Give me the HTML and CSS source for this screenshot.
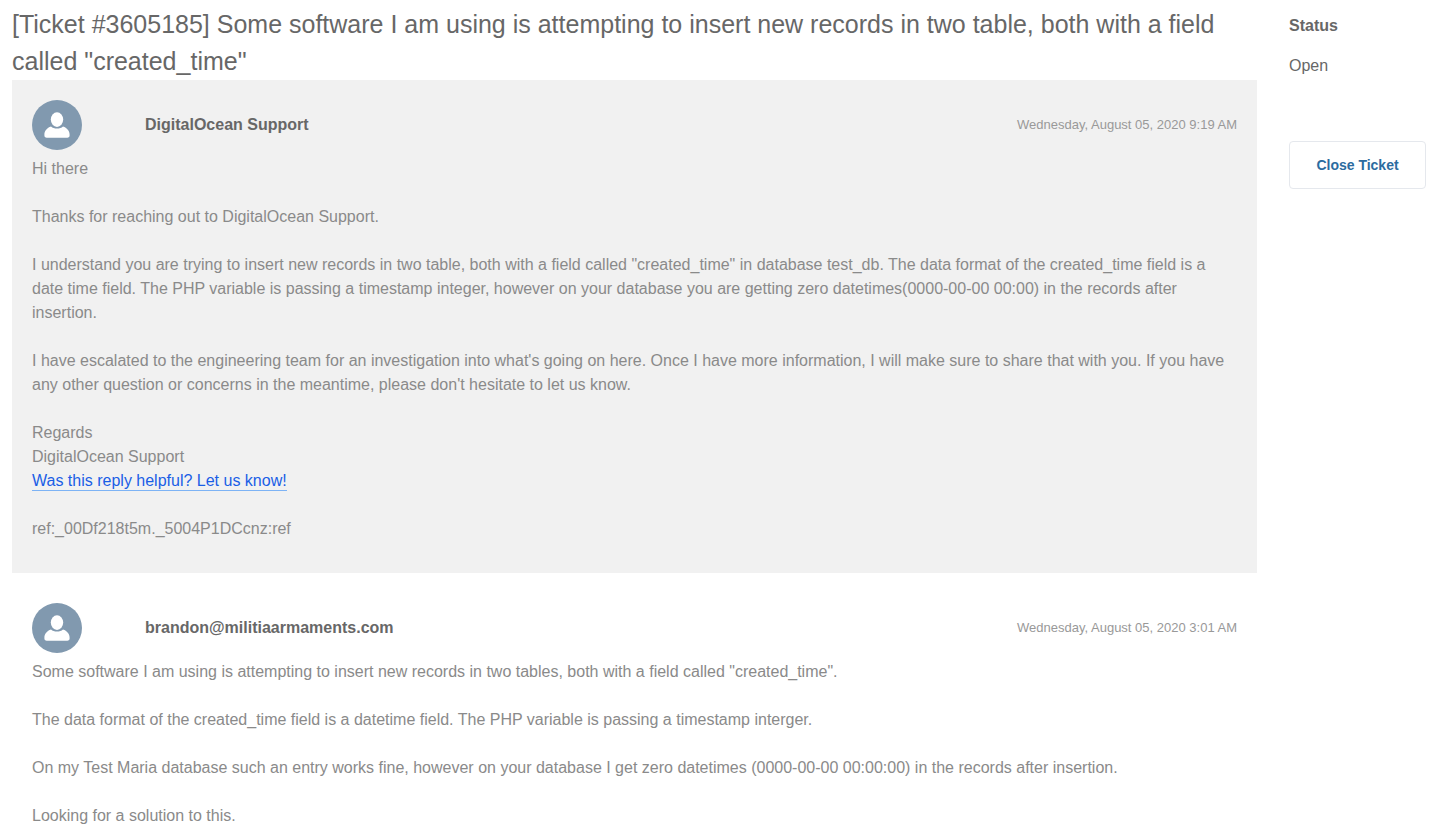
FILE: index.html
```
<!DOCTYPE html>
<html lang="en">
    <head>
        <meta charset="utf-8">
        <title>Ticket #3605185</title>
        <link rel="stylesheet" href="styles.css">
    </head>
    <body>
        <div class="ticket">
            <main class="thread">
                <h1>[Ticket #3605185] Some software I am using is attempting to insert new records in two table, both with a field called "created_time"</h1>

                <article class="message staff">
                    <header class="message-header">
                        <svg class="avatar" viewBox="0 0 50 50" aria-hidden="true">
                            <circle cx="25" cy="25" r="25" fill="#8199af"/>
                            <ellipse cx="25" cy="19.600" rx="6.200" ry="7.300" fill="#fff"/>
                            <path fill="#fff" d="M19 26.500C20.500 27.900 22.600 28.600 25 28.600S29.500 27.900 31 26.500C35 27.800 37.600 30.800 37.600 34.800V35.600C37.600 37 36.800 37.700 35.300 37.700H14.700C13.200 37.700 12.400 37 12.400 35.600V34.800C12.400 30.800 15 27.800 19 26.500Z"/>
                        </svg>
                        <span class="author">DigitalOcean Support</span>
                        <time class="date" datetime="2020-08-05T09:19">Wednesday, August 05, 2020 9:19 AM</time>
                    </header>
                    <div class="message-body">
                        <p>Hi there</p>
                        <p>Thanks for reaching out to DigitalOcean Support.</p>
                        <p>I understand you are trying to insert new records in two table, both with a field called "created_time" in database test_db. The data format of the created_time field is a date time field. The PHP variable is passing a timestamp integer, however on your database you are getting zero datetimes(0000-00-00 00:00) in the records after insertion.</p>
                        <p>I have escalated to the engineering team for an investigation into what's going on here. Once I have more information, I will make sure to share that with you. If you have any other question or concerns in the meantime, please don't hesitate to let us know.</p>
                        <p>Regards<br>
                        DigitalOcean Support<br>
                        <a href="#">Was this reply helpful? Let us know!</a></p>
                        <p>ref:_00Df218t5m._5004P1DCcnz:ref</p>
                    </div>
                </article>

                <article class="message">
                    <header class="message-header">
                        <svg class="avatar" viewBox="0 0 50 50" aria-hidden="true">
                            <circle cx="25" cy="25" r="25" fill="#8199af"/>
                            <ellipse cx="25" cy="19.600" rx="6.200" ry="7.300" fill="#fff"/>
                            <path fill="#fff" d="M19 26.500C20.500 27.900 22.600 28.600 25 28.600S29.500 27.900 31 26.500C35 27.800 37.600 30.800 37.600 34.800V35.600C37.600 37 36.800 37.700 35.300 37.700H14.700C13.200 37.700 12.400 37 12.400 35.600V34.800C12.400 30.800 15 27.800 19 26.500Z"/>
                        </svg>
                        <span class="author">brandon@militiaarmaments.com</span>
                        <time class="date" datetime="2020-08-05T03:01">Wednesday, August 05, 2020 3:01 AM</time>
                    </header>
                    <div class="message-body">
                        <p>Some software I am using is attempting to insert new records in two tables, both with a field called "created_time".</p>
                        <p>The data format of the created_time field is a datetime field. The PHP variable is passing a timestamp interger.</p>
                        <p>On my Test Maria database such an entry works fine, however on your database I get zero datetimes (0000-00-00 00:00:00) in the records after insertion.</p>
                        <p>Looking for a solution to this.</p>
                    </div>
                </article>
            </main>

            <aside class="sidebar">
                <h2>Status</h2>
                <p class="status">Open</p>
                <button type="button" class="close-ticket">Close Ticket</button>
            </aside>
        </div>
    </body>
</html>
```

FILE: styles.css
```
* {
    box-sizing: border-box;
}
body {
    margin: 0;
    font-family: "Liberation Sans", Arial, Helvetica, sans-serif;
    font-size: 16px;
    line-height: 24px;
    color: #676767;
    background: #fff;
}
h1, h2, p {
    margin: 0;
}
.ticket {
    display: flex;
    align-items: flex-start;
    gap: 32px;
    padding: 6px 27px 0 12px;
}
.thread {
    flex: 1;
}
h1 {
    font-size: 25px;
    font-weight: normal;
    line-height: 37px;
}
.message {
    padding: 20px 20px 32px;
    margin-bottom: 10px;
}
.message:last-child {
    padding-bottom: 0;
    margin-bottom: 0;
}
.staff {
    background: #f1f1f1;
}
.message-header {
    display: flex;
    align-items: center;
    margin-bottom: 7px;
}
.avatar {
    width: 50px;
    height: 50px;
    margin-right: 63px;
}
.author {
    font-weight: bold;
}
.date {
    margin-left: auto;
    font-size: 13px;
    color: #999;
}
.message-body {
    color: #8a8a8a;
}
.message-body p + p {
    margin-top: 24px;
}
.message-body a {
    color: #1a5ee6;
    text-decoration: none;
    border-bottom: 1px solid #7db3f5;
    padding-bottom: 1px;
}
.sidebar {
    width: 137px;
    padding-top: 8px;
}
.sidebar h2 {
    font-size: 16px;
    line-height: 24px;
}
.status {
    margin: 16px 0 63px;
}
.close-ticket {
    width: 100%;
    height: 48px;
    border: 1px solid #e5e8ed;
    border-radius: 4px;
    background: #fff;
    color: #2c6c9f;
    font: bold 14px "Liberation Sans", Arial, Helvetica, sans-serif;
}
```
